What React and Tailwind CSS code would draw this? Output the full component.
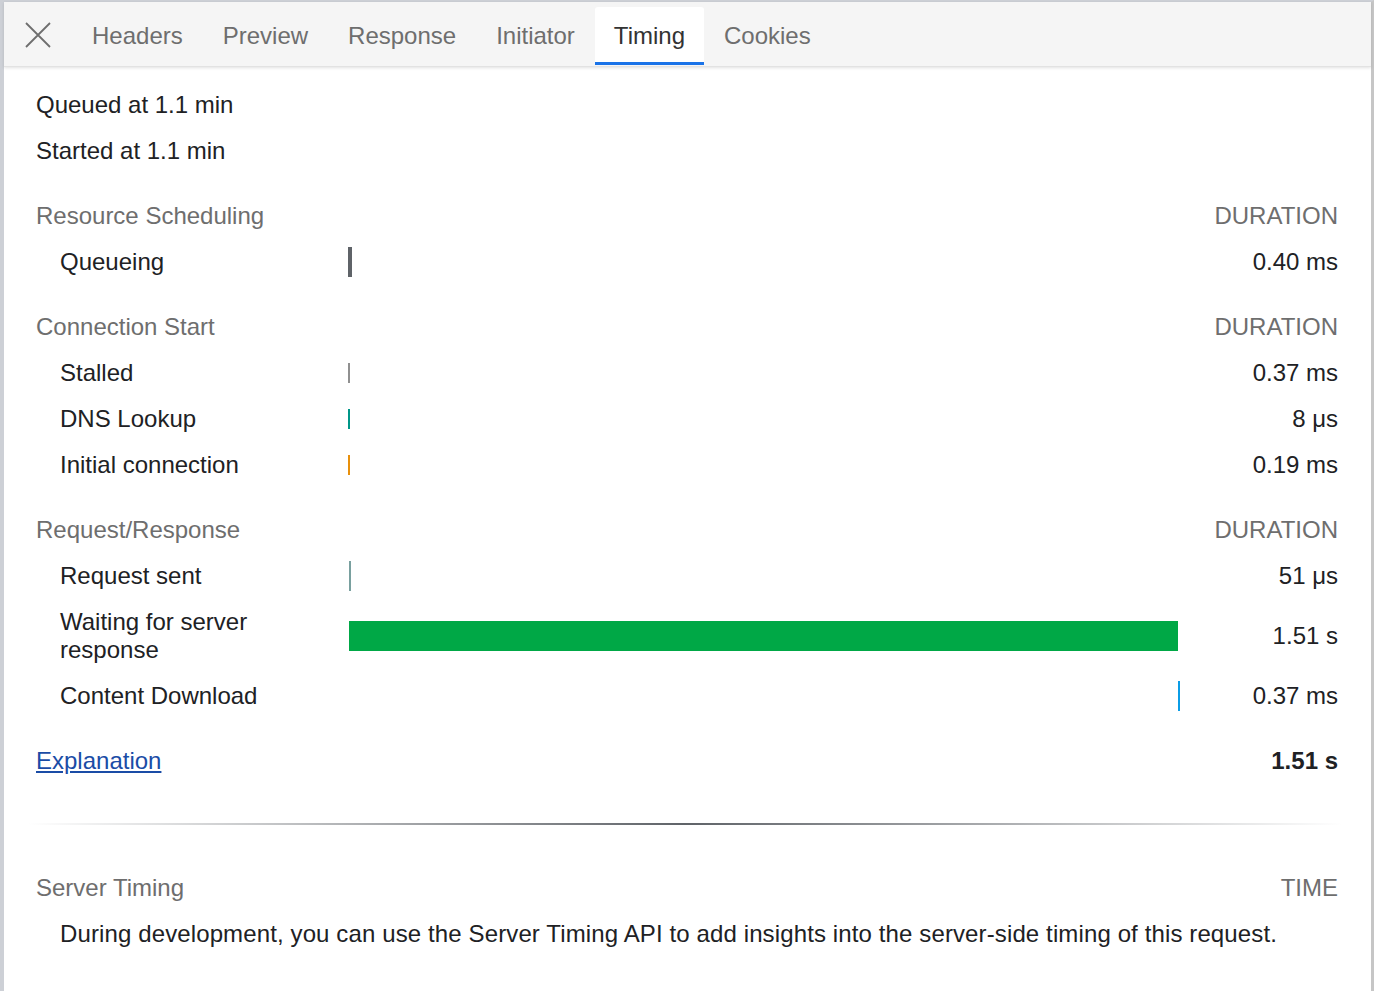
import React from "react";

// Timing rows: bar offset/width in px inside the 832px track
const sections = [
  {
    title: "Resource Scheduling",
    rows: [{ label: "Queueing", left: 0, width: 4, height: 30, color: "#5f6368", dur: "0.40 ms" }],
  },
  {
    title: "Connection Start",
    rows: [
      { label: "Stalled", left: 0, width: 2, height: 20, color: "#909090", dur: "0.37 ms" },
      { label: "DNS Lookup", left: 0, width: 2, height: 20, color: "#009688", dur: "8 μs" },
      { label: "Initial connection", left: 0, width: 2, height: 20, color: "#e8900c", dur: "0.19 ms" },
    ],
  },
  {
    title: "Request/Response",
    rows: [
      { label: "Request sent", left: 1, width: 2, height: 30, color: "#79a09f", dur: "51 μs" },
      { label: "Waiting for server response", left: 1, width: 829, height: 30, color: "#00a846", dur: "1.51 s", wrap: true },
      { label: "Content Download", left: 830, width: 2, height: 30, color: "#0b9de6", dur: "0.37 ms" },
    ],
  },
];

const tabs = ["Headers", "Preview", "Response", "Initiator", "Timing", "Cookies"];

const TimingRow = ({ row }) => (
  <div className="grid grid-cols-[312px_1fr_158px] items-center py-[9px]">
    <div className={`pl-6 leading-[28px] ${row.wrap ? "w-[230px]" : ""}`}>{row.label}</div>
    <div className="flex items-center h-[28px]">
      <div className="shrink-0" style={{ marginLeft: row.left, width: row.width, height: row.height, background: row.color }} />
    </div>
    <div className="text-right leading-[28px]">{row.dur}</div>
  </div>
);

const App = () => {
  return (
    <div className="w-[1374px] min-h-[991px] bg-white border-l-4 border-t-2 border-r-[3px] border-l-[#cdd0d6] border-t-[#cdd0d6] border-r-[#c6c6c6] font-['Liberation_Sans',Arial,sans-serif] text-[24px] text-[#202124]">
      {/* Tab bar */}
      <div className="flex items-start h-[65px] bg-[#f5f5f5] shadow-[0_1px_3px_rgba(0,0,0,0.12)] border-b border-[#e2e2e2]">
        <button className="w-[68px] h-[65px] flex items-center justify-center text-[#6e6e6e]">
          <svg width="26" height="26" viewBox="0 0 26 26" fill="none" stroke="#6e6e6e" strokeWidth="1.8">
            <path d="M1 1 L25 25 M25 1 L1 25" />
          </svg>
        </button>
        {tabs.map((tab) =>
          tab === "Timing" ? (
            <div key={tab} className="mt-[5px] h-[58px] px-[19px] flex items-center bg-white rounded-t-[3px] border-b-[3px] border-[#1a73e8] text-[#333] pt-[3px]">
              {tab}
            </div>
          ) : (
            <div key={tab} className="h-[65px] px-5 flex items-center text-[#6e6e6e] pt-[3px]">
              {tab}
            </div>
          )
        )}
      </div>

      <div className="pl-8 pr-[33px] pt-[15px]">
        <div className="leading-[28px] py-[9px]">Queued at 1.1 min</div>
        <div className="leading-[28px] py-[9px]">Started at 1.1 min</div>

        {sections.map((section) => (
          <div key={section.title} className="mt-[19px]">
            <div className="flex justify-between leading-[28px] py-[9px] text-[#6e6e6e]">
              <span>{section.title}</span>
              <span>DURATION</span>
            </div>
            {section.rows.map((row) => (
              <TimingRow key={row.label} row={row} />
            ))}
          </div>
        ))}

        <div className="mt-[19px] flex justify-between leading-[28px] py-[9px]">
          <a href="#" className="text-[#1a4ca6] underline underline-offset-2">Explanation</a>
          <span className="font-bold">1.51 s</span>
        </div>

        <div className="mt-[39px] -ml-2 -mr-1 h-[2px] bg-[linear-gradient(to_right,rgba(95,99,104,0),#5f6368_50%,rgba(95,99,104,0))]" />

        <div className="mt-[40px] flex justify-between leading-[28px] py-[9px] text-[#6e6e6e]">
          <span>Server Timing</span>
          <span>TIME</span>
        </div>
        <div className="pl-6 leading-[28px] py-[9px] tracking-[0.005em]">
          During development, you can use the Server Timing API to add insights into the server-side timing of this request.
        </div>
      </div>
    </div>
  );
};

export default App;
